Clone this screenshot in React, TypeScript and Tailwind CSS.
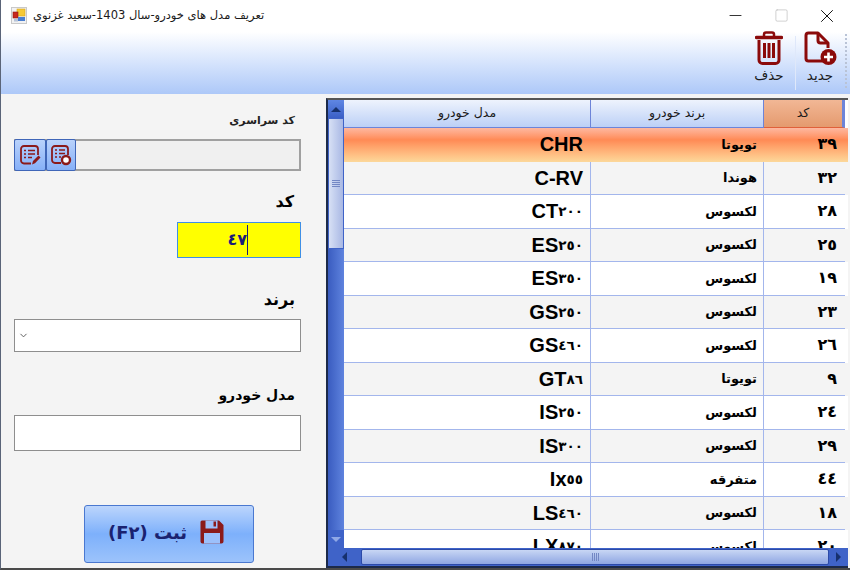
import { ChevronDown, Minus, Square, X } from "lucide-react";

const rows = [
  { code: "٣٩", brand: "تویوتا", model: "CHR", digits: "" },
  { code: "٣٢", brand: "هوندا", model: "C-RV", digits: "" },
  { code: "٢٨", brand: "لکسوس", model: "CT", digits: "٢٠٠" },
  { code: "٢٥", brand: "لکسوس", model: "ES", digits: "٢٥٠" },
  { code: "١٩", brand: "لکسوس", model: "ES", digits: "٣٥٠" },
  { code: "٢٣", brand: "لکسوس", model: "GS", digits: "٢٥٠" },
  { code: "٢٦", brand: "لکسوس", model: "GS", digits: "٤٦٠" },
  { code: "٩", brand: "تویوتا", model: "GT", digits: "٨٦" },
  { code: "٢٤", brand: "لکسوس", model: "IS", digits: "٢٥٠" },
  { code: "٢٩", brand: "لکسوس", model: "IS", digits: "٣٠٠" },
  { code: "٤٤", brand: "متفرقه", model: "Ix", digits: "٥٥" },
  { code: "١٨", brand: "لکسوس", model: "LS", digits: "٤٦٠" },
  { code: "٢٠", brand: "لکسوس", model: "LX", digits: "٨٧٠" },
];

const arabicFont = { fontFamily: '"DejaVu Sans", sans-serif' };

function AppIcon() {
  return (
    <svg width="16" height="17" viewBox="0 0 16 17" fill="none">
      <rect x="0.500" y="0.500" width="15" height="16" fill="#f2f2f2" stroke="#c9c9c9" />
      <rect x="6" y="2" width="8" height="7" fill="#f6c935" stroke="#d8a520" strokeWidth="0.600" />
      <rect x="2" y="5" width="5" height="6" fill="#c8281e" stroke="#8a1a14" strokeWidth="0.600" />
      <rect x="7" y="10" width="7" height="4" fill="#4a7fd0" />
      <rect x="3" y="12" width="4" height="2.500" fill="#b8c4d8" />
    </svg>
  );
}

function FileAddIcon() {
  return (
    <svg width="36" height="36" viewBox="0 0 36 36" fill="none">
      <path d="M21 30H6.500A2.500 2.500 0 0 1 4 27.500V4.500A2.500 2.500 0 0 1 6.500 2H16L26 12V17" stroke="#8b0a0a" strokeWidth="3" strokeLinejoin="round" />
      <path d="M16 2V9.500A2.500 2.500 0 0 0 18.500 12H26" stroke="#8b0a0a" strokeWidth="3" strokeLinejoin="round" />
      <circle cx="26.500" cy="26" r="8" fill="#8b0a0a" />
      <path d="M26.500 21.500V30.500M22 26H31" stroke="#fff" strokeWidth="2.600" />
    </svg>
  );
}

function TrashIcon() {
  return (
    <svg width="28" height="34" viewBox="0 0 28 34" fill="none">
      <path d="M9 5V3.500A2 2 0 0 1 11 1.500H17A2 2 0 0 1 19 3.500V5" stroke="#8b0a0a" strokeWidth="2.500" />
      <path d="M1.500 6.500H26.500" stroke="#8b0a0a" strokeWidth="3.500" strokeLinecap="round" />
      <path d="M4 9V29A3.500 3.500 0 0 0 7.500 32.500H20.500A3.500 3.500 0 0 0 24 29V9" stroke="#8b0a0a" strokeWidth="3" />
      <path d="M9.500 12V27M14 12V27M18.500 12V27" stroke="#8b0a0a" strokeWidth="3" />
    </svg>
  );
}

function ListEditIcon() {
  return (
    <svg width="22" height="22" viewBox="0 0 22 22" fill="none">
      <path d="M12 19.500H5A3 3 0 0 1 2 16.500V5A3 3 0 0 1 5 2H16A3 3 0 0 1 19 5V11" stroke="#8b1a1a" strokeWidth="1.800" />
      <path d="M5 6.500H7M9 6.500H16M5 10H7M9 10H16M5 13.500H7M9 13.500H13" stroke="#8b1a1a" strokeWidth="1.600" />
      <path d="M13 20.500L14 17L19.500 11.500L21.500 13.500L16 19.300Z" fill="#8b1a1a" />
    </svg>
  );
}

function ListAddIcon() {
  return (
    <svg width="22" height="22" viewBox="0 0 22 22" fill="none">
      <path d="M11 19H5A3 3 0 0 1 2 16V5A3 3 0 0 1 5 2H15A3 3 0 0 1 18 5V11" stroke="#8b1a1a" strokeWidth="1.800" />
      <path d="M5 6H7M9 6H15M5 9.500H7M9 9.500H15M5 13H7M9 13H11" stroke="#8b1a1a" strokeWidth="1.600" />
      <circle cx="16" cy="16" r="4" fill="#fff" stroke="#8b1a1a" strokeWidth="2.400" />
    </svg>
  );
}

function SaveIcon() {
  return (
    <svg width="26" height="26" viewBox="0 0 26 26" fill="none">
      <path d="M3 1.500H20L24.500 6V22.500A2 2 0 0 1 22.500 24.500H3.500A2 2 0 0 1 1.500 22.500V3A1.500 1.500 0 0 1 3 1.500Z" fill="#8b1a1a" />
      <rect x="6.500" y="1.500" width="12" height="8" fill="#9cc0fb" />
      <rect x="14.500" y="2.500" width="2.500" height="5" fill="#8b1a1a" />
      <rect x="5" y="14" width="16" height="10.500" fill="#9cc0fb" />
    </svg>
  );
}

function ArrowGlyph({ dir }: { dir: "up" | "down" | "left" | "right" }) {
  const cls = {
    up: "border-x-[5px] border-b-[5px] border-x-transparent border-b-[#16306e]",
    down: "border-x-[5px] border-t-[5px] border-x-transparent border-t-[#8fa8e6]",
    left: "border-y-[5px] border-r-[5px] border-y-transparent border-r-[#16306e]",
    right: "border-y-[5px] border-l-[5px] border-y-transparent border-l-[#16306e]",
  }[dir];
  return <div className={`h-0 w-0 ${cls}`} />;
}

function Grip({ vertical }: { vertical?: boolean }) {
  return (
    <div className={vertical ? "flex flex-col gap-[1px]" : "flex gap-[1px]"}>
      {[0, 1, 2, 3].map((i) => (
        <div key={i} className={vertical ? "h-px w-2 bg-[#7387c4]" : "h-2 w-px bg-[#7387c4]"} />
      ))}
    </div>
  );
}

export default function App() {
  return (
    <div
      className="flex h-[570px] w-[850px] flex-col overflow-hidden border-b-2 border-l border-b-[#4a4a4a] border-l-[#5a6478] bg-[#f4f4f4] text-black"
      style={{ fontFamily: '"Liberation Sans", "DejaVu Sans", sans-serif' }}
    >
      {/* title bar + toolbar share one gradient */}
      <div className="flex h-[94px] flex-none flex-col bg-gradient-to-b from-white from-[34%] to-[#adc8f8]">
        <div className="flex h-[31px] items-center">
          <div className="ml-[10px] flex-none"><AppIcon /></div>
          <div dir="rtl" className="ml-[6px] text-[11.500px] text-[#1a1a1a]" style={arabicFont}>
            تعریف مدل های خودرو-سال 1403-سعید غزنوي
          </div>
          <div className="ml-auto flex items-center">
            <div className="flex w-[46px] justify-center"><Minus size={19} strokeWidth={1} /></div>
            <div className="flex w-[46px] justify-center"><Square size={15} strokeWidth={1} className="text-[#b5b5b5]" /></div>
            <div className="flex w-[46px] justify-center"><X size={22} strokeWidth={1} /></div>
          </div>
        </div>
        <div className="flex flex-1 items-start justify-end pr-[3px]">
          <div className="flex w-[52px] flex-col items-center">
            <TrashIcon />
            <span className="mt-[2px] text-[13.500px] leading-[16px] text-[#1a1a1a]" style={arabicFont}>حذف</span>
          </div>
          <div className="mr-[4px] mt-[5px] h-[54px] w-px bg-[#dfe8fa]" />
          <div className="flex w-[40px] flex-col items-center">
            <FileAddIcon />
            <span className="mt-0 text-[13.500px] leading-[16px] text-[#1a1a1a]" style={arabicFont}>جدید</span>
          </div>
          <div className="ml-[5px] mt-[3px] h-[54px] w-[2px] border-l-2 border-dotted border-[#b9c3d6]" />
        </div>
      </div>

      <div className="flex min-h-0 flex-1">
        {/* form side */}
        <div className="flex w-[325px] flex-none flex-col pl-[13px] pr-[25px] text-right" dir="ltr">
          <div dir="rtl" className="mr-[6px] mt-[18px] h-[18px] text-[11px] font-bold leading-[18px] text-[#222]" style={arabicFont}>کد سراسری</div>
          <div className="mt-[9px] flex h-[32px] border-2 border-[#a0a0a0] bg-[#f0f0f0]">
            <button className="ml-[-2px] mt-[-2px] flex h-[32px] w-[32px] flex-none items-center justify-center rounded-[2px] border border-[#3f66b8] bg-gradient-to-b from-[#b9d2fb] to-[#86b0f8]"><ListEditIcon /></button>
            <button className="mt-[-2px] flex h-[32px] w-[30px] flex-none items-center justify-center rounded-[2px] border border-[#3f66b8] bg-gradient-to-b from-[#b9d2fb] to-[#86b0f8]"><ListAddIcon /></button>
          </div>
          <div dir="rtl" className="mr-[7px] mt-[21px] h-[20px] text-[16px] font-bold leading-[20px]" style={arabicFont}>کد</div>
          <div className="mt-[10px] flex h-[36px] w-[124px] items-center justify-end self-end border border-[#3f8fe6] bg-[#ffff00] pr-[52px]">
            <span className="text-[16px] font-bold text-[#1c1c7a]" style={arabicFont}>٤٧</span>
            <span className="h-[30px] w-px bg-[#1c1c7a]" />
          </div>
          <div dir="rtl" className="mr-[6px] mt-[32px] h-[20px] text-[16px] font-bold leading-[20px]" style={arabicFont}>برند</div>
          <div className="mt-[9px] flex h-[33px] items-center border border-[#8e8e8e] bg-white pl-[3px]">
            <ChevronDown size={11} className="text-[#555]" />
          </div>
          <div dir="rtl" className="mr-[6px] mt-[33px] h-[20px] text-[14px] font-bold leading-[20px]" style={arabicFont}>مدل خودرو</div>
          <div className="mt-[10px] h-[36px] border border-[#8e8e8e] bg-white" />
          <button className="ml-[70px] mt-[54px] flex h-[58px] w-[170px] items-center justify-center gap-[12px] rounded-[3px] border border-[#4a78d0] bg-gradient-to-b from-[#bcd5fc] via-[#7db0fb] via-50% to-[#9cc3fb] pb-[4px] pr-[5px] text-[18px] font-bold text-[#1a2270]" style={arabicFont}>
            <span dir="rtl">ثبت (F٢)</span>
            <SaveIcon />
          </button>
        </div>

        {/* grid side */}
        <div className="mt-[4px] flex h-[470px] w-[522px] flex-none flex-col border-2 border-r-0 border-[#1c2a4a] border-t-[#555] bg-white">
          <div className="flex min-h-0 flex-1">
            <div className="flex w-[16px] flex-none flex-col bg-[#3f63c8]">
              <div className="flex h-[18px] flex-none items-center justify-center bg-gradient-to-b from-[#5f86e4] to-[#3b5fc6]"><ArrowGlyph dir="up" /></div>
              <div className="flex h-[131px] flex-none items-center justify-center border border-[#3f63c8] bg-gradient-to-r from-[#d7e0f5] to-[#a9b8e4]"><Grip vertical /></div>
              <div className="flex-1 bg-gradient-to-r from-[#3a5cc0] to-[#5f83de]" />
              <div className="flex h-[18px] flex-none items-center justify-center"><ArrowGlyph dir="down" /></div>
            </div>
            <div className="flex min-w-0 flex-1 flex-col overflow-hidden">
              <div className="flex h-[28px] flex-none text-[12.500px] text-[#1a1a1a]" style={arabicFont}>
                <div dir="rtl" className="flex w-[247px] items-center justify-center border-b border-r border-[#6d84d8] bg-gradient-to-b from-[#eef3fd] to-[#bcd0f6]">مدل خودرو</div>
                <div dir="rtl" className="flex w-[173px] items-center justify-center border-b border-r border-[#6d84d8] bg-gradient-to-b from-[#eef3fd] to-[#bcd0f6]">برند خودرو</div>
                <div dir="rtl" className="flex w-[81px] items-center justify-center border-b border-r-[3px] border-b-[#e0603a] border-r-[#6d84d8] bg-gradient-to-b from-[#f2b795] to-[#e49a6e]">کد</div>
              </div>
              {rows.map((r, i) => {
                const selected = i === 0;
                const bg = selected
                  ? "bg-gradient-to-b from-[#fdb8a0] via-[#ff8a55] via-35% to-[#fcd89a]"
                  : i % 2 === 1
                    ? "bg-[#f4f4f4]"
                    : "bg-white";
                const line = selected ? "border-transparent" : "border-[#a3b6ec]";
                return (
                  <div key={r.code} className={`flex h-[33.500px] flex-none font-bold ${bg}`}>
                    <div dir="ltr" className={`flex w-[247px] flex-none items-center justify-end border-b border-r pr-[7px] text-[20px] ${line}`}>
                      <span>{r.model}</span>
                      {r.digits && <span className="text-[13.500px]" style={arabicFont}>{r.digits}</span>}
                    </div>
                    <div dir="rtl" className={`flex w-[173px] flex-none items-center border-b border-r pr-[6px] text-[13px] ${line}`} style={arabicFont}>{r.brand}</div>
                    <div dir="rtl" className={`flex w-[81px] flex-none items-center border-b pr-[8px] text-[16px] ${line}`} style={arabicFont}>{r.code}</div>
                  </div>
                );
              })}
            </div>
          </div>
          <div className="flex h-[18px] flex-none items-center bg-[#3f63c8]">
            <div className="flex h-full w-[33px] flex-none items-center justify-center"><ArrowGlyph dir="left" /></div>
            <div className="flex h-[16px] flex-1 items-center justify-center rounded-[2px] border border-[#2c4aa8] bg-gradient-to-b from-[#c8d6f4] to-[#8fa6e2]"><Grip /></div>
            <div className="flex h-full w-[19px] flex-none items-center justify-center"><ArrowGlyph dir="right" /></div>
          </div>
        </div>
      </div>
    </div>
  );
}
